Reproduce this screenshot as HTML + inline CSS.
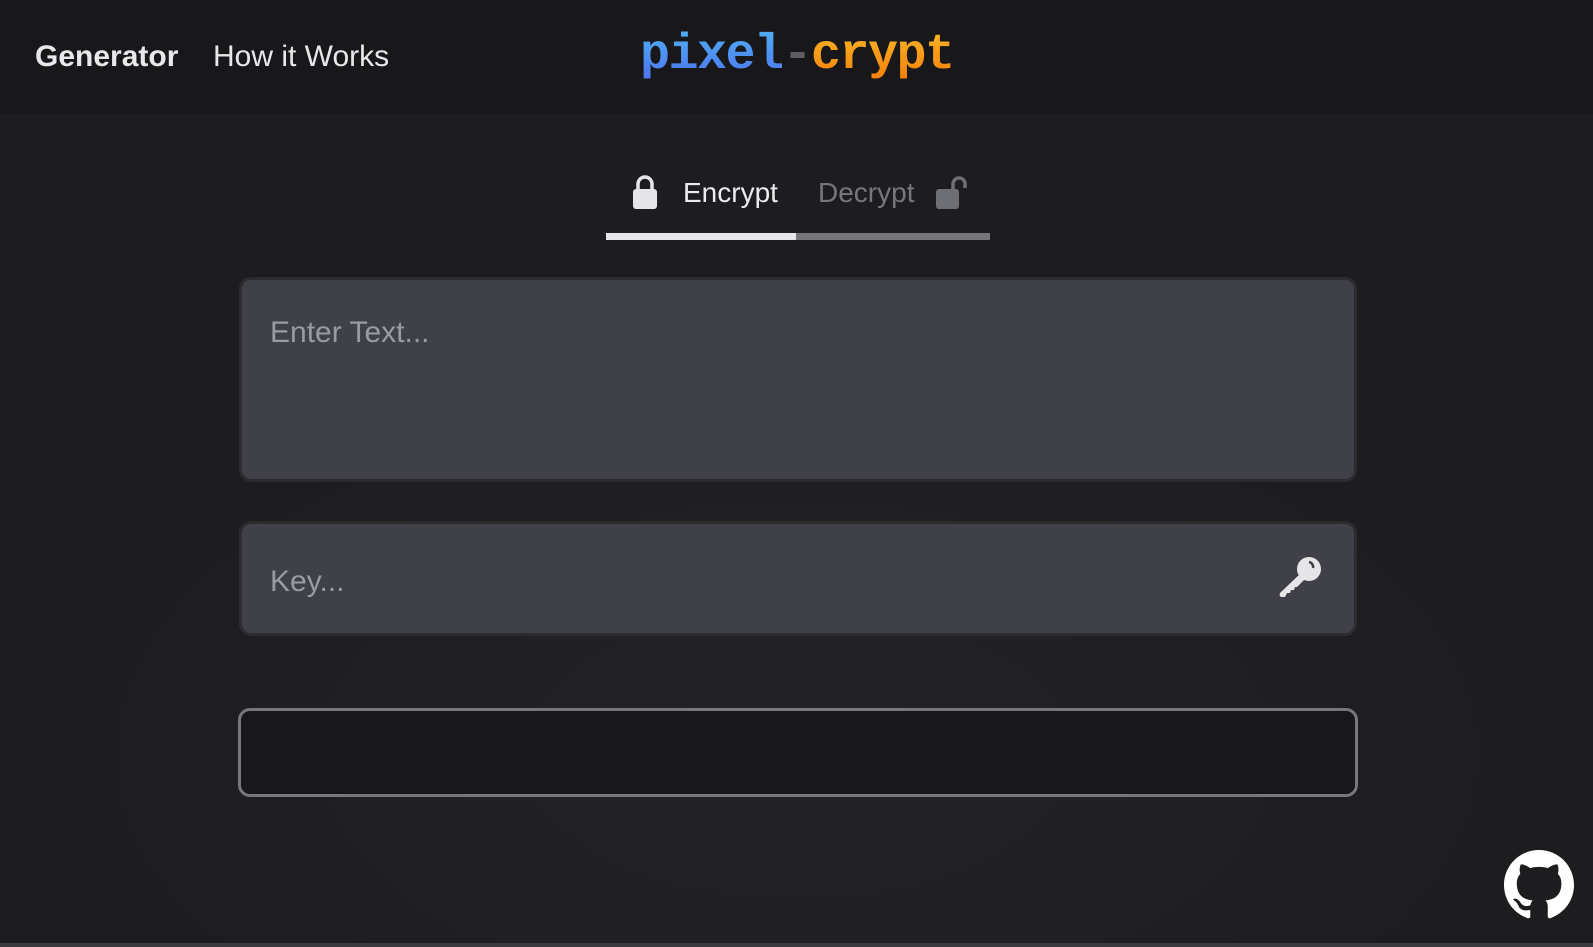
<!DOCTYPE html>
<html><head><meta charset="utf-8"><style>
*{margin:0;padding:0;box-sizing:border-box}
html,body{width:1593px;height:947px;overflow:hidden;background:#1b1b1e;font-family:"Liberation Sans",sans-serif}
.hdr{position:absolute;left:0;top:0;width:1593px;height:114px;background:#18181b}
.main{position:absolute;left:0;top:114px;width:1593px;height:829px;background:radial-gradient(ellipse 720px 380px at 797px 640px,#242427 0%,#1d1d20 100%);}
.botline{position:absolute;left:0;top:943px;width:1593px;height:4px;background:#3a3a3e}
.nav{position:absolute;top:40px;font-size:30px;color:#e8e8ea}
.logo{position:absolute;left:640px;top:27px;font-family:"Liberation Mono",monospace;font-size:50px;font-weight:bold;letter-spacing:-1.5px}
.b{background:linear-gradient(180deg,#4fb3f2,#4e6ef0);-webkit-background-clip:text;color:transparent}
.o{background:linear-gradient(180deg,#f8b928,#f57a08);-webkit-background-clip:text;color:transparent}
.tab{position:absolute;top:177px;font-size:28px}
.box{position:absolute;left:239px;width:1118px;background:#404148;border:3px solid #2c2c30;border-radius:12px}
.ph{position:absolute;left:28px;font-size:30px;color:#9a9ba2}
</style></head><body>
<div class="hdr"></div>
<div class="main"></div>
<div class="botline"></div>
<div class="nav" style="left:35px;font-weight:bold">Generator</div>
<div class="nav" style="left:213px">How it Works</div>
<div class="logo"><span class="b">pixel</span><span style="color:#5c5c62">-</span><span class="o">crypt</span></div>

<svg style="position:absolute;left:632px;top:175px" width="26" height="34" viewBox="0 0 26 34"><path d="M6 15V9a7 7 0 0 1 14 0v6" fill="none" stroke="#e6e6e8" stroke-width="3.5"/><rect x="1" y="14" width="24" height="20" rx="3" fill="#e6e6e8"/></svg>
<div class="tab" style="left:683px;color:#ececee">Encrypt</div>
<div class="tab" style="left:818px;color:#76767d">Decrypt</div>
<svg style="position:absolute;left:935px;top:175px" width="34" height="34" viewBox="0 0 34 34"><path d="M18 15V9a6 6 0 0 1 12 0v4" fill="none" stroke="#6e6e75" stroke-width="3.5"/><rect x="1" y="14" width="23" height="20" rx="3" fill="#6e6e75"/></svg>
<div style="position:absolute;left:606px;top:233px;width:384px;height:7px;background:#75757c"></div>
<div style="position:absolute;left:606px;top:233px;width:190px;height:7px;background:#e6e6e8"></div>

<div class="box" style="top:277px;height:205px"><div class="ph" style="top:36px">Enter Text...</div></div>
<div class="box" style="top:521px;height:115px"><div class="ph" style="top:41px">Key...</div>
<svg style="position:absolute;left:1035px;top:30px" width="48" height="48" viewBox="0 0 48 48"><circle cx="32" cy="15" r="12" fill="#e6e6e8"/><path d="M32 8a5 5 0 0 1 4 6" fill="none" stroke="#404148" stroke-width="2.5"/><path d="M24 19 L29 24 L20 33 L18 33 L17 36 L14 36 L13 39 L10 39 L8 43 L4 43 Q2 42 3 39Z" fill="#e6e6e8"/></svg></div>
<div style="position:absolute;left:238px;top:708px;width:1120px;height:89px;background:#18181b;border:3px solid #77777e;border-radius:12px"></div>

<svg style="position:absolute;left:1504px;top:850px" width="70" height="70" viewBox="0 0 16 16"><path fill="#fff" d="M8 0C3.580 0 0 3.58 0 8c0 3.54 2.29 6.53 5.47 7.590.4.07.55-.17.55-.38 0-.19-.01-.82-.01-1.49-2.01.37-2.53-.49-2.69-.94-.09-.23-.48-.94-.82-1.13-.28-.15-.68-.52-.01-.53.63-.01 1.080.58 1.230.82.72 1.21 1.87.87 2.33.66.07-.52.28-.87.51-1.07-1.78-.2-3.64-.89-3.64-3.95 0-.87.31-1.59.82-2.15-.08-.2-.36-1.02.08-2.12 0 0 .67-.21 2.2.82.64-.18 1.32-.27 2-.27.68 0 1.36.09 2 .27 1.53-1.04 2.2-.82 2.2-.82.44 1.1.16 1.92.08 2.12.51.56.82 1.27.82 2.15 0 3.07-1.87 3.75-3.65 3.95.29.25.54.73.54 1.48 0 1.07-.01 1.93-.01 2.2 0 .21.15.46.55.38A8.013 8.013 0 0016 8c0-4.42-3.58-8-8-8z"/></svg>
</body></html>
